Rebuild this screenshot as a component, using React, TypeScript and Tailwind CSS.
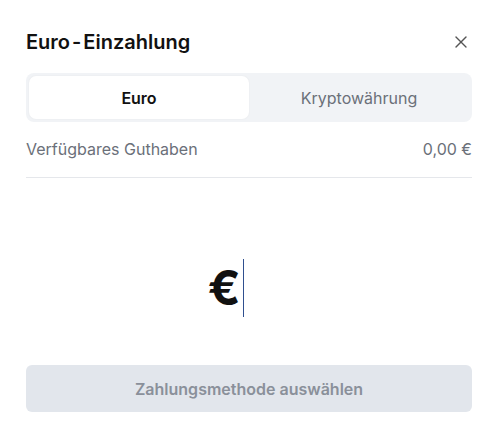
import { X } from "lucide-react";

export default function App() {
  return (
    <div
      className="w-[498px] h-[435px] bg-white px-[26px] flex flex-col"
      style={{ fontFamily: "Inter, 'Noto Sans', sans-serif" }}
    >
      <div className="flex items-center justify-between pt-[24px] h-[72px] pb-[12px]">
        <h1 className="text-[20px] font-semibold text-[#111]">
          Euro<span className="mx-[2px]">-</span>Einzahlung
        </h1>
        <X className="w-[20px] h-[20px] text-[#555] mr-[1px]" strokeWidth={1.6} />
      </div>

      <div className="mt-[1px] h-[49px] rounded-[8px] bg-[#f1f3f6] p-[3px] flex">
        <button className="flex-1 rounded-[7px] bg-white text-[16px] font-semibold text-[#111] shadow-[0_0_2px_rgba(0,0,0,0.06)]">
          Euro
        </button>
        <button className="flex-1 text-[16px] text-[#6b7079]">Kryptowährung</button>
      </div>

      <div className="flex items-center justify-between h-[56px] border-b border-[#e5e7eb] pb-[1px]">
        <span className="text-[16px] text-[#6b7079]">Verfügbares Guthaben</span>
        <span className="text-[16px] text-[#6b7079]">0,00 €</span>
      </div>

      <div className="flex-1 flex items-center justify-center pr-[46px]">
        <div className="flex items-center mt-[32px]">
          <span className="text-[48px] font-bold text-[#111] leading-none">€</span>
          <span className="ml-[2px] w-[1.5px] h-[58px] bg-[#2f4f8f]" />
        </div>
      </div>

      <button className="mb-[23px] h-[47px] rounded-[6px] bg-[#e2e6ec] text-[16px] font-semibold text-[#8a909a]">
        Zahlungsmethode auswählen
      </button>
    </div>
  );
}
